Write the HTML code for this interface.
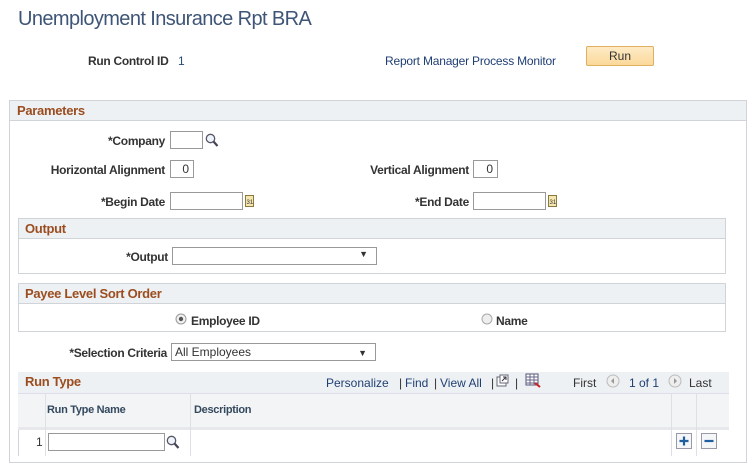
<!DOCTYPE html>
<html><head><style>
*{box-sizing:border-box;margin:0;padding:0}
body{width:754px;height:469px;background:#fff;font-family:"Liberation Sans",Arial,sans-serif;font-size:12px;color:#333;position:relative;overflow:hidden}
.a{position:absolute;white-space:nowrap}
.lbl{position:absolute;font-weight:bold;color:#333;text-align:right;white-space:nowrap;letter-spacing:-0.3px}
.in{position:absolute;border:1px solid #999;background:#fff;height:18px}
.box{position:absolute;border:1px solid #d0d4d8}
.hd{position:absolute;left:0;right:0;top:0;height:20px;background:#eef1f4;border-bottom:1px solid #d0d4d8;color:#9b4d1f;font-weight:bold;font-size:13px;padding:2px 0 0 6px;letter-spacing:-0.3px}
.lnk{color:#1f3f73}
</style></head><body>
<div class="a" style="left:18px;top:8px;font-size:20px;color:#3e5577;letter-spacing:-0.6px">Unemployment Insurance Rpt BRA</div>
<div class="lbl" style="left:88px;top:54px">Run Control ID</div>
<div class="a" style="left:178px;top:54px;color:#2a4a7a">1</div>
<div class="a lnk" style="left:385px;top:54px;letter-spacing:-0.2px">Report Manager Process Monitor</div>
<div class="a" style="left:586px;top:46px;width:68px;height:20px;border:1px solid #e0b060;border-radius:2px;background:linear-gradient(#fdebc6,#fbd99a);text-align:center;line-height:18px;color:#333">Run</div>

<div class="box" style="left:9px;top:100px;width:738px;height:363px">
<div class="hd" style="padding-left:7px">Parameters</div></div>

<div class="lbl" style="right:589px;top:134px">*Company</div>
<div class="in" style="left:170px;top:131px;width:33px"></div>
<svg class="a" style="left:205px;top:133px" width="14" height="15"><circle cx="5.5" cy="5.5" r="4.2" fill="#eef4fa" stroke="#556" stroke-width="1.3"/><line x1="8.5" y1="8.5" x2="12.5" y2="13" stroke="#445" stroke-width="2.2"/></svg>

<div class="lbl" style="right:589px;top:163px">Horizontal Alignment</div>
<div class="in" style="left:170px;top:160px;width:24px;text-align:right;padding-right:4px;line-height:16px">0</div>
<div class="lbl" style="right:285px;top:163px">Vertical Alignment</div>
<div class="in" style="left:473px;top:160px;width:25px;text-align:right;padding-right:4px;line-height:16px">0</div>

<div class="lbl" style="right:589px;top:195px">*Begin Date</div>
<div class="in" style="left:170px;top:192px;width:73px"></div>
<svg class="a" style="left:245px;top:194px" width="10" height="14"><rect x="0.5" y="1.5" width="8" height="11" fill="#f5e6b0" stroke="#8a7a40"/><text x="1.5" y="10" font-size="6" font-family="Liberation Sans" fill="#333">31</text></svg>
<div class="lbl" style="right:285px;top:195px">*End Date</div>
<div class="in" style="left:473px;top:192px;width:73px"></div>
<svg class="a" style="left:548px;top:194px" width="10" height="14"><rect x="0.5" y="1.5" width="8" height="11" fill="#f5e6b0" stroke="#8a7a40"/><text x="1.5" y="10" font-size="6" font-family="Liberation Sans" fill="#333">31</text></svg>

<div class="box" style="left:18px;top:218px;width:708px;height:56px"><div class="hd">Output</div></div>
<div class="lbl" style="right:586px;top:250px">*Output</div>
<div class="in" style="left:172px;top:247px;width:205px"><span class="a" style="right:8px;top:1px;font-size:9px">▼</span></div>

<div class="box" style="left:18px;top:283px;width:708px;height:49px"><div class="hd">Payee Level Sort Order</div></div>
<svg class="a" style="left:175px;top:313px" width="12" height="12"><circle cx="6" cy="6" r="5" fill="#f2f2f2" stroke="#999"/><circle cx="6" cy="6" r="2.2" fill="#555"/></svg>
<div class="lbl" style="left:191px;top:314px">Employee ID</div>
<svg class="a" style="left:481px;top:313px" width="12" height="12"><circle cx="6" cy="6" r="5" fill="#eee" stroke="#aaa"/></svg>
<div class="lbl" style="left:496px;top:314px">Name</div>

<div class="lbl" style="right:587px;top:346px">*Selection Criteria</div>
<div class="in" style="left:171px;top:343px;width:205px;padding-left:3px;line-height:16px">All Employees<span class="a" style="right:8px;top:1px;font-size:9px">▼</span></div>

<div class="box" style="left:18px;top:372px;width:711px;height:84px;border-right:none;border-bottom:none"></div>
<div class="a" style="left:18px;top:372px;width:711px;height:21px;background:#eef1f4"></div>
<div class="a" style="left:25px;top:374px;color:#9b4d1f;font-weight:bold;font-size:13px;letter-spacing:-0.3px">Run Type</div>
<div class="a lnk" style="left:326px;top:376px">Personalize</div>
<div class="a" style="left:399px;top:376px">|</div>
<div class="a lnk" style="left:405px;top:376px">Find</div>
<div class="a" style="left:434px;top:376px">|</div>
<div class="a lnk" style="left:440px;top:376px">View All</div>
<div class="a" style="left:491px;top:376px">|</div>
<svg class="a" style="left:496px;top:374px" width="14" height="13"><rect x="1" y="3" width="9" height="9" fill="#fff" stroke="#667"/><rect x="4" y="1" width="8" height="8" fill="#fff" stroke="#667"/><path d="M6 7 L10 3 M7 3 H10 V6" stroke="#334" fill="none"/></svg>
<div class="a" style="left:515px;top:376px;color:#333">|</div>
<svg class="a" style="left:525px;top:373px" width="16" height="15"><rect x="1" y="1" width="12" height="11" fill="#fff" stroke="#557"/><path d="M1 4H13M1 7H13M1 10H13M5 1V12M9 1V12" stroke="#668"/><path d="M10 10 L15 14" stroke="#c22" stroke-width="2"/></svg>
<div class="a" style="left:573px;top:376px;color:#333">First</div>
<svg class="a" style="left:606px;top:374px" width="14" height="14"><circle cx="7" cy="7" r="6" fill="#eee" stroke="#bbb"/><path d="M8 4 L5 7 L8 10Z" fill="#999"/></svg>
<div class="a lnk" style="left:629px;top:376px">1 of 1</div>
<svg class="a" style="left:668px;top:374px" width="14" height="14"><circle cx="7" cy="7" r="6" fill="#eee" stroke="#bbb"/><path d="M6 4 L9 7 L6 10Z" fill="#999"/></svg>
<div class="a" style="left:689px;top:376px;color:#333">Last</div>

<div class="a" style="left:18px;top:393px;width:711px;height:34px;background:#f2f4f6;border-top:1px solid #dde"></div>
<div class="a" style="left:18px;top:427px;width:711px;height:3px;background:#e6e8eb"></div>
<div class="a" style="left:45px;top:393px;width:1px;height:63px;background:#dde0e4"></div>
<div class="a" style="left:190px;top:393px;width:1px;height:63px;background:#dde0e4"></div>
<div class="a" style="left:671px;top:393px;width:1px;height:63px;background:#dde0e4"></div>
<div class="a" style="left:696px;top:393px;width:1px;height:63px;background:#dde0e4"></div>
<div class="a" style="left:47px;top:404px;font-weight:bold;font-size:11px;color:#34495e;letter-spacing:-0.3px">Run Type Name</div>
<div class="a" style="left:194px;top:404px;font-weight:bold;font-size:11px;color:#34495e;letter-spacing:-0.3px">Description</div>
<div class="a" style="left:36px;top:435px">1</div>
<div class="in" style="left:48px;top:433px;width:117px"></div>
<svg class="a" style="left:166px;top:435px" width="14" height="15"><circle cx="5.5" cy="5.5" r="4.2" fill="#eef4fa" stroke="#556" stroke-width="1.3"/><line x1="8.5" y1="8.5" x2="12.5" y2="13" stroke="#445" stroke-width="2.2"/></svg>
<svg class="a" style="left:676px;top:433px" width="16" height="16"><rect x="0.5" y="0.5" width="15" height="15" fill="#f4f6f8" stroke="#99a"/><path d="M8 3.5V12.5M3.5 8H12.5" stroke="#1f5fa0" stroke-width="2.2"/></svg>
<svg class="a" style="left:701px;top:433px" width="16" height="16"><rect x="0.5" y="0.5" width="15" height="15" fill="#f4f6f8" stroke="#99a"/><path d="M3.5 8H12.5" stroke="#1f5fa0" stroke-width="2.2"/></svg>
</body></html>
